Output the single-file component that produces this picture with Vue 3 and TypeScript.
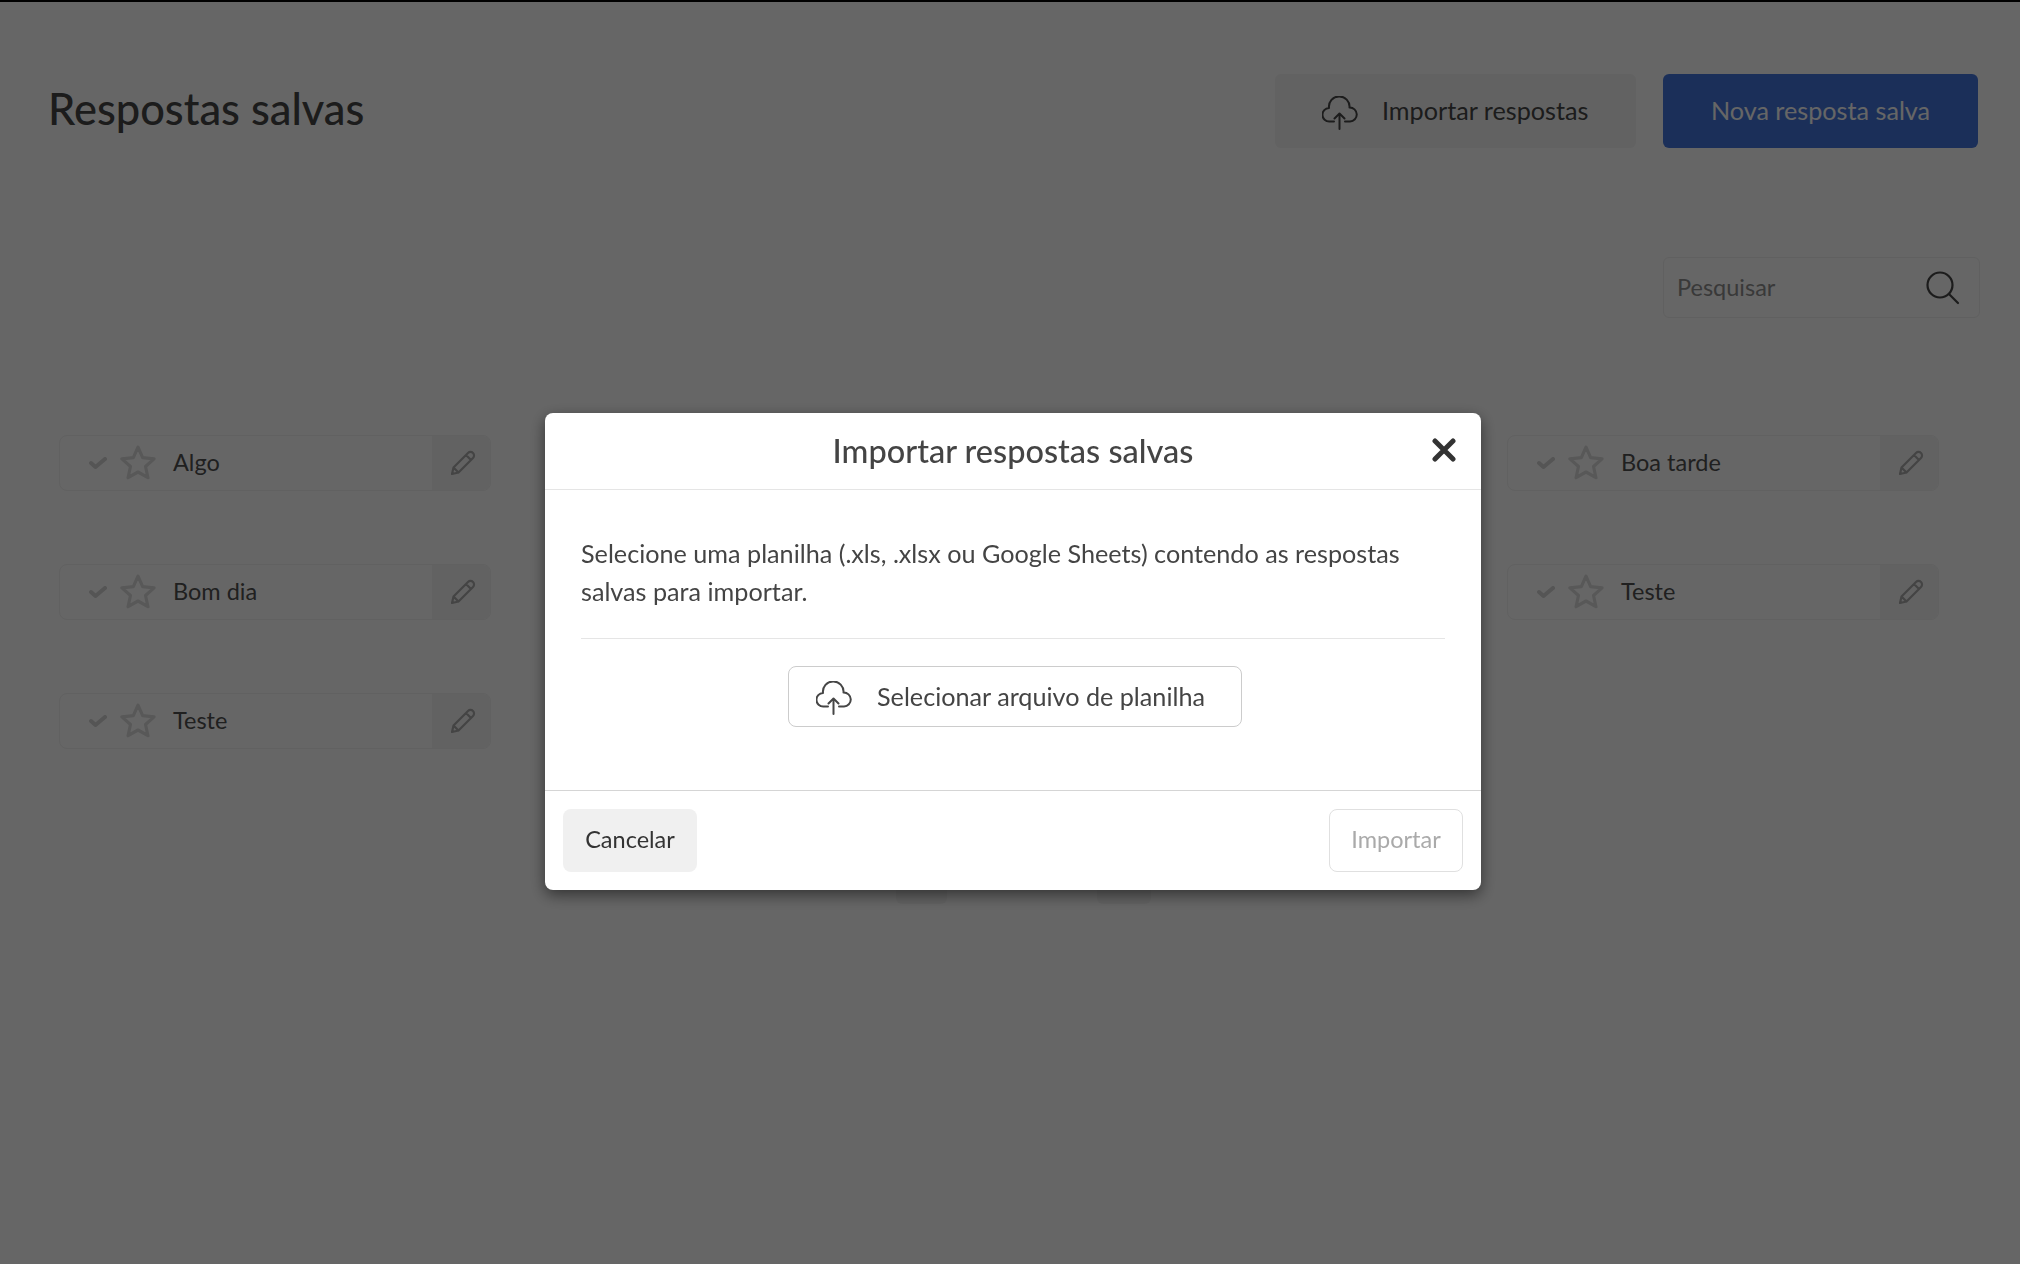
<script setup lang="ts">
type Column = { id: number; rows: (string | null)[] };

// the middle column sits behind the dialog, its rows never show a label
const columns: Column[] = [
  { id: 1, rows: ["Algo", "Bom dia", "Teste"] },
  { id: 2, rows: [null, null, null] },
  { id: 3, rows: ["Boa tarde", "Teste"] },
];
</script>

<template>
  <div class="page">
    <div class="top-line"></div>
    <header class="head">
      <h1>Respostas salvas</h1>
      <div class="head-actions">
        <button class="btn btn-gray">
          <svg class="cloud" viewBox="0 0 36 34"><path d="M12 25.5H7.5A6.8 6.8 0 0 1 7 11.9A10.3 10.3 0 1 1 27.5 11.5A7 7 0 0 1 28 25.5H23M17.5 33V18M12.5 22.5L17.5 17.5L22.5 22.5" /></svg>
          <span>Importar respostas</span>
        </button>
        <button class="btn btn-blue"><span>Nova resposta salva</span></button>
      </div>
    </header>

    <div class="search-row">
      <div class="search">
        <span>Pesquisar</span>
        <svg class="search-icon" viewBox="0 0 34 34"><circle cx="14" cy="14" r="12.5" /><path d="M23 23L32 32" /></svg>
      </div>
    </div>

    <section class="grid">
      <div v-for="col in columns" :key="col.id" class="col">
        <div v-for="(row, i) in col.rows" :key="i" class="row">
          <svg class="check" viewBox="0 0 18 12"><path d="M2 6L6.5 10L16 2" /></svg>
          <svg class="star" viewBox="0 0 34 34"><path d="M17 2L21.4 11.900L32.200 13.100L24.100 20.300L26.400 30.900L17 25.500L7.600 30.900L9.900 20.300L1.800 13.100L12.600 11.900Z" /></svg>
          <span class="row-text">{{ row }}</span>
          <button class="edit">
            <svg class="pencil" viewBox="0 0 26 26"><path d="M2 24L3.500 17.500L18 3A3.500 3.500 0 0 1 23 8L8.500 22.500ZM3.500 17.500L8.500 22.500M16 5L21 10" /></svg>
          </button>
        </div>
      </div>
    </section>

    <nav class="pager">
      <button class="page-btn prev"><svg viewBox="0 0 14 24"><path d="M12 2L2 12L12 22" /></svg></button>
      <button class="page-btn next"><svg viewBox="0 0 14 24"><path d="M2 2L12 12L2 22" /></svg></button>
    </nav>

    <div class="overlay">
      <div class="modal">
        <div class="modal-head">
          <h2>Importar respostas salvas</h2>
          <button class="close" aria-label="Fechar">
            <svg viewBox="0 0 24 24"><path d="M3 3L21 21M21 3L3 21" /></svg>
          </button>
        </div>
        <div class="modal-body">
          <p>Selecione uma planilha (.xls, .xlsx ou Google Sheets) contendo as respostas salvas para importar.</p>
          <hr />
          <button class="file-btn">
            <svg class="cloud" viewBox="0 0 36 34"><path d="M12 25.5H7.5A6.8 6.8 0 0 1 7 11.9A10.3 10.3 0 1 1 27.5 11.5A7 7 0 0 1 28 25.5H23M17.5 33V18M12.5 22.5L17.5 17.5L22.5 22.5" /></svg>
            <span>Selecionar arquivo de planilha</span>
          </button>
        </div>
        <div class="modal-foot">
          <button class="foot-btn cancel">Cancelar</button>
          <button class="foot-btn import" disabled>Importar</button>
        </div>
      </div>
    </div>
  </div>
</template>

<style scoped>
.page { font-family: Lato, "Liberation Sans", sans-serif; background: #fff; color: #464646; min-height: 1264px; box-sizing: border-box; }
button { font-family: inherit; cursor: pointer; }
svg { fill: none; stroke-linecap: round; stroke-linejoin: round; display: block; flex-shrink: 0; }
.top-line { height: 2px; background: #000; }
.head { display: flex; justify-content: space-between; align-items: center; padding: 72px 42px 0 48px; }
h1 { margin: 0; font-size: 43.400px; font-weight: 500; line-height: 74px; margin-top: -6px; }
.head-actions { display: flex; gap: 27px; }
.btn { height: 74px; border: none; border-radius: 6px; font-size: 25.200px; display: flex; align-items: center; padding-bottom: 3px; }
.btn-gray { background: #f5f5f5; color: #464646; width: 361px; padding-left: 47px; gap: 24px; }
.btn-blue { background: #4476de; color: #fff; width: 315px; justify-content: center; }
.cloud { width: 36px; height: 34px; stroke: #464646; stroke-width: 2; margin-top: 5px; }
.search-row { display: flex; justify-content: flex-end; padding: 109px 40px 0 0; }
.search { width: 317px; height: 61px; box-sizing: border-box; border: 1px solid #f0f0f0; border-radius: 6px; display: flex; justify-content: space-between; align-items: center; padding: 0 19px 2px 13px; font-size: 23.500px; color: #8f8f8f; }
.search-icon { width: 34px; height: 34px; stroke: #464646; stroke-width: 2.200; margin-top: 2px; }
.grid { display: flex; justify-content: space-between; padding: 117px 81px 0 59px; }
.col { width: 432px; display: flex; flex-direction: column; gap: 73px; }
.row { height: 56px; box-sizing: border-box; border: 1px solid #f2f2f2; border-radius: 8px; display: flex; align-items: center; padding-left: 29px; font-size: 23.500px; color: #505050; overflow: hidden; }
.check { width: 18px; height: 12px; stroke: #d4d4d4; stroke-width: 4; margin-right: 13px; }
.star { width: 36px; height: 36px; stroke: #dcdcdc; stroke-width: 3; margin-right: 17px; }
.row-text { flex: 1; padding-bottom: 3px; }
.edit { width: 58px; height: 100%; border: none; background: #f5f5f5; display: flex; align-items: center; justify-content: center; padding: 0 0 0 3px; }
.pencil { width: 26px; height: 26px; stroke: #aaa; stroke-width: 2.200; }
.pager { display: flex; justify-content: center; gap: 150px; padding: 99px 0 0 26px; }
.page-btn { height: 56px; border: none; background: #f5f5f5; border-radius: 6px; padding: 0; display: flex; align-items: center; justify-content: center; }
.page-btn svg { width: 14px; height: 24px; stroke-width: 2.500; margin-top: 4px; }
.prev { width: 51px; }
.prev svg { stroke: #bbb; }
.next { width: 54px; }
.next svg { stroke: #333; }
.overlay { position: fixed; inset: 0; background: rgba(0, 0, 0, 0.6); display: flex; justify-content: center; align-items: flex-start; padding: 413px 0 0 6px; box-sizing: border-box; }
.modal { width: 936px; background: #fff; border-radius: 8px; box-shadow: 0 5px 15px rgba(0, 0, 0, 0.5); position: relative; color: #444; }
.modal-head { height: 76px; border-bottom: 1px solid #e5e5e5; display: flex; align-items: center; justify-content: center; }
h2 { margin: 0; font-size: 32.500px; font-weight: 500; color: #444; padding-bottom: 2px; }
.close { position: absolute; top: 25px; right: 25px; width: 24px; height: 24px; border: none; background: none; padding: 0; }
.close svg { width: 24px; height: 24px; stroke: #333; stroke-width: 5; }
.modal-body { padding: 44px 36px 63px; display: flex; flex-direction: column; align-items: center; }
.modal-body p { margin: 0; font-size: 25.200px; line-height: 38px; align-self: stretch; }
hr { align-self: stretch; border: none; border-top: 1px solid #e5e5e5; margin: 28px 0 27px; }
.file-btn { width: 454px; height: 61px; background: #fff; border: 1px solid #ccc; border-radius: 8px; display: flex; align-items: center; gap: 25px; padding: 0 0 2px 27px; font-size: 25.200px; color: #444; margin-left: 4px; }
.modal-foot { border-top: 1px solid #d5d5d5; display: flex; justify-content: space-between; padding: 18px; }
.foot-btn { height: 63px; width: 134px; border-radius: 8px; font-size: 23.500px; padding: 0 0 3px; }
.cancel { background: #f0f0f0; border: none; color: #333; }
.import { background: #fff; border: 1px solid #e0e0e0; color: #aaa; cursor: default; }
</style>
